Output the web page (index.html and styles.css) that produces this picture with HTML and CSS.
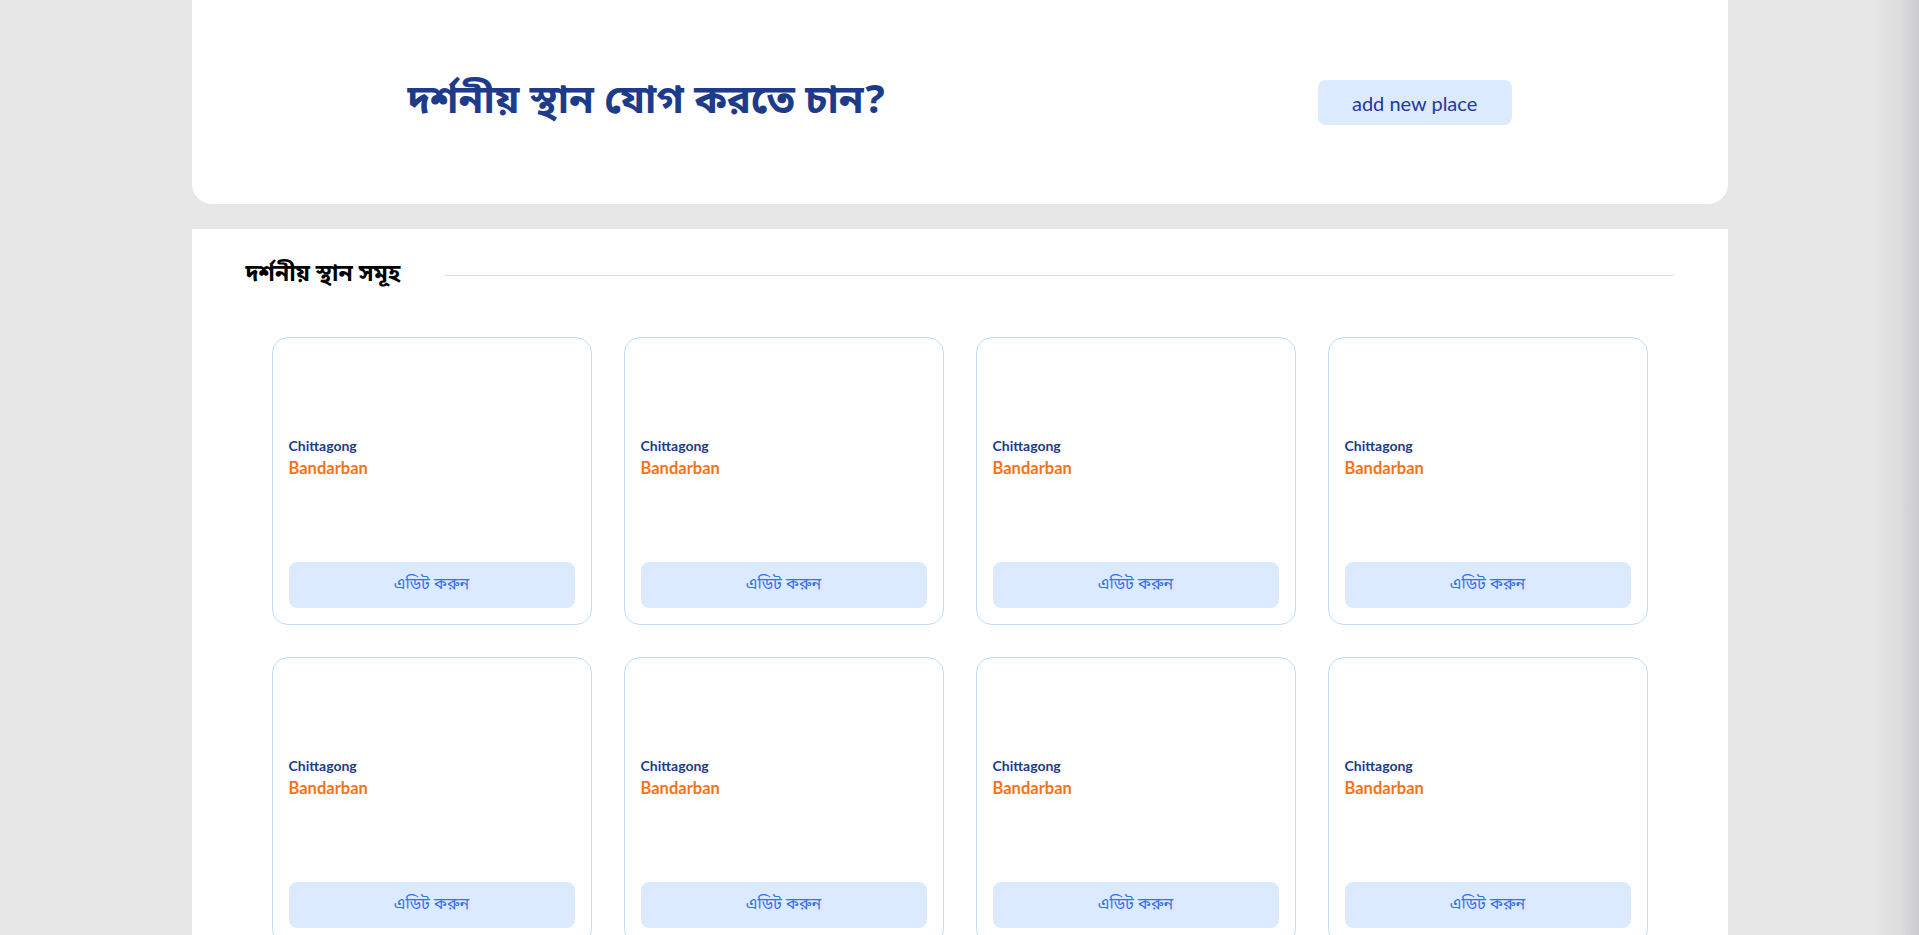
FILE: index.html
```html
<!DOCTYPE html>
<html lang="bn">
<head>
<meta charset="utf-8">
<title>দর্শনীয় স্থান</title>
<link rel="stylesheet" href="styles.css">
</head>
<body>
<div class="edge-shadow"></div>
<main class="page">
  <section class="hero">
    <h1 class="hero-title">দর্শনীয় স্থান যোগ করতে চান?</h1>
    <button class="hero-btn">add new place</button>
  </section>

  <section class="places">
    <div class="places-head">
      <h2 class="places-title">দর্শনীয় স্থান সমূহ</h2>
      <div class="places-line"></div>
    </div>
    <div class="grid">
      <div class="card"><div class="card-img"></div><p class="card-div">Chittagong</p><p class="card-place">Bandarban</p><button class="card-btn">এডিট করুন</button></div>
      <div class="card"><div class="card-img"></div><p class="card-div">Chittagong</p><p class="card-place">Bandarban</p><button class="card-btn">এডিট করুন</button></div>
      <div class="card"><div class="card-img"></div><p class="card-div">Chittagong</p><p class="card-place">Bandarban</p><button class="card-btn">এডিট করুন</button></div>
      <div class="card"><div class="card-img"></div><p class="card-div">Chittagong</p><p class="card-place">Bandarban</p><button class="card-btn">এডিট করুন</button></div>
      <div class="card"><div class="card-img"></div><p class="card-div">Chittagong</p><p class="card-place">Bandarban</p><button class="card-btn">এডিট করুন</button></div>
      <div class="card"><div class="card-img"></div><p class="card-div">Chittagong</p><p class="card-place">Bandarban</p><button class="card-btn">এডিট করুন</button></div>
      <div class="card"><div class="card-img"></div><p class="card-div">Chittagong</p><p class="card-place">Bandarban</p><button class="card-btn">এডিট করুন</button></div>
      <div class="card"><div class="card-img"></div><p class="card-div">Chittagong</p><p class="card-place">Bandarban</p><button class="card-btn">এডিট করুন</button></div>
    </div>
  </section>
</main>
</body>
</html>
```

FILE: styles.css
```css
* { box-sizing: border-box; }
html, body { margin: 0; padding: 0; }
body {
  background: #e7e7e7;
  font-family: "Lato", "Noto Sans Bengali", "Noto Sans", sans-serif;
  overflow: hidden;
}
.edge-shadow {
  position: fixed;
  top: 0;
  right: 0;
  width: 46px;
  height: 100%;
  background: linear-gradient(to right, rgba(200,200,205,0) 0%, rgba(200,200,205,0.35) 60%, rgba(195,196,202,0.8) 100%);
  pointer-events: none;
}
.page {
  max-width: 1536px;
  margin: 0 auto;
}
.hero {
  height: 204px;
  background: #fff;
  border-radius: 0 0 20px 20px;
  display: flex;
  align-items: center;
  justify-content: space-around;
}
.hero-title {
  margin: 0;
  font-family: "Noto Sans Bengali", "Noto Sans", sans-serif;
  font-size: 40px;
  font-weight: 700;
  color: #1e3a8a;
}
.hero-btn {
  width: 194px;
  height: 45px;
  margin-top: 1px;
  border: none;
  border-radius: 8px;
  background: #dbeafe;
  color: #24399a;
  font-family: "Lato", sans-serif;
  font-size: 20px;
  cursor: pointer;
}
.places {
  margin-top: 25px;
  background: #fff;
  padding: 30px 0 60px;
}
.places-head {
  display: flex;
  align-items: center;
  gap: 45px;
  height: 32px;
  margin: 0 54px 0 54px;
}
.places-title {
  margin: 0;
  font-family: "Noto Sans Bengali", "Noto Sans", sans-serif;
  font-size: 23px;
  font-weight: 700;
  color: #000;
  white-space: nowrap;
}
.places-line {
  flex: 1;
  height: 1px;
  background: #d5deee;
}
.grid {
  margin-top: 46px;
  display: grid;
  grid-template-columns: repeat(4, 320px);
  gap: 32px 32px;
  justify-content: center;
}
.card {
  height: 288px;
  border: 1px solid #bfdbfe;
  border-radius: 16px;
  padding: 16px;
  display: flex;
  flex-direction: column;
  background: #fff;
}
.card-img {
  height: 82px;
}
.card-div {
  margin: 0;
  font-size: 14px;
  line-height: 20px;
  font-weight: 700;
  color: #1e3a8a;
}
.card-place {
  margin: 0;
  font-size: 16.5px;
  line-height: 24px;
  font-weight: 700;
  color: #f97316;
}
.card-btn {
  margin-top: auto;
  height: 46px;
  width: 100%;
  border: none;
  border-radius: 8px;
  background: #dbeafe;
  color: #3472ea;
  font-family: "Noto Sans Bengali", "Noto Sans", sans-serif;
  font-size: 16px;
  cursor: pointer;
}
```
